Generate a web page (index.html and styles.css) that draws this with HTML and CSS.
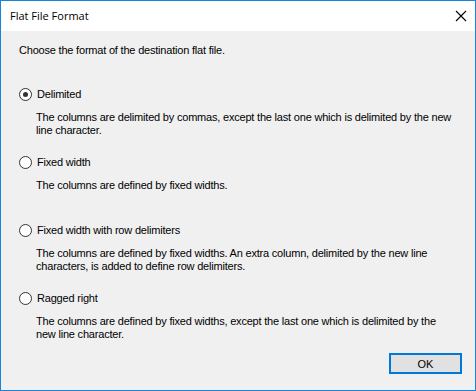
FILE: index.html
```html
<!DOCTYPE html>
<html>
<head>
<meta charset="utf-8">
<link rel="stylesheet" href="styles.css">
</head>
<body>
<div class="window">
  <div class="titlebar">
    <span class="title">Flat File Format</span>
    <svg class="close" width="12" height="12" viewBox="0 0 12 12"><path d="M1 1 L11 11 M11 1 L1 11" stroke="#000" stroke-width="1.1" fill="none"/></svg>
  </div>
  <div class="content">
    <p class="intro">Choose the format of the destination flat file.</p>
    <div class="options">
      <div class="option">
        <div class="radio-row"><span class="radio checked"></span><span>Delimited</span></div>
        <p class="desc">The columns are delimited by commas, except the last one which is delimited by the new<br>line character.</p>
      </div>
      <div class="option">
        <div class="radio-row"><span class="radio"></span><span>Fixed width</span></div>
        <p class="desc">The columns are defined by fixed widths.</p>
      </div>
      <div class="option">
        <div class="radio-row"><span class="radio"></span><span>Fixed width with row delimiters</span></div>
        <p class="desc">The columns are defined by fixed widths. An extra column, delimited by the new line<br>characters, is added to define row delimiters.</p>
      </div>
      <div class="option">
        <div class="radio-row"><span class="radio"></span><span>Ragged right</span></div>
        <p class="desc">The columns are defined by fixed widths, except the last one which is delimited by the<br>new line character.</p>
      </div>
    </div>
    <div class="footer">
      <button class="ok">OK</button>
    </div>
  </div>
</div>
</body>
</html>
```
FILE: styles.css
```css
html, body {
  margin: 0;
  padding: 0;
  background: #f0f0f0;
}
.window {
  width: 476px;
  height: 391px;
  box-sizing: border-box;
  border: 1px solid #1883d7;
  display: flex;
  flex-direction: column;
  font-family: "Liberation Sans", Arial, sans-serif;
  font-size: 11px;
  letter-spacing: -0.2px;
  color: #000;
}
.titlebar {
  height: 30px;
  background: #fff;
  display: flex;
  align-items: center;
  justify-content: space-between;
  padding: 0 8px 0 9px;
  flex-shrink: 0;
}
.title {
  font-family: "Open Sans", "Noto Sans", sans-serif;
  font-size: 11px;
  letter-spacing: 0;
  margin-top: -1px;
}
.close {
  display: block;
  margin-top: -1px;
}
.content {
  flex: 1;
  background: #f0f0f0;
  padding: 13px 0 0 18px;
  display: flex;
  flex-direction: column;
}
.intro {
  margin: 0;
  line-height: 13px;
}
.options {
  margin-top: 31px;
  display: flex;
  flex-direction: column;
}
.option {
  height: 68px;
}
.radio-row {
  display: flex;
  align-items: center;
  height: 13px;
  line-height: 13px;
}
.radio {
  width: 11px;
  height: 11px;
  border: 1px solid #333;
  border-radius: 50%;
  background: #fff;
  margin-right: 5px;
  box-sizing: content-box;
  position: relative;
  flex-shrink: 0;
}
.radio.checked::after {
  content: "";
  position: absolute;
  left: 3px;
  top: 3px;
  width: 5px;
  height: 5px;
  border-radius: 50%;
  background: #333;
}
.desc {
  margin: 10px 0 0 17px;
  line-height: 13px;
  white-space: nowrap;
}
.footer {
  display: flex;
  justify-content: flex-end;
  padding-right: 13px;
  margin-top: -7px;
}
.ok {
  width: 73px;
  height: 21px;
  border: 2px solid #0078d7;
  background: #e1e1e1;
  font-family: "Liberation Sans", Arial, sans-serif;
  font-size: 11px;
  letter-spacing: 0;
  color: #000;
  padding: 0;
}
```
